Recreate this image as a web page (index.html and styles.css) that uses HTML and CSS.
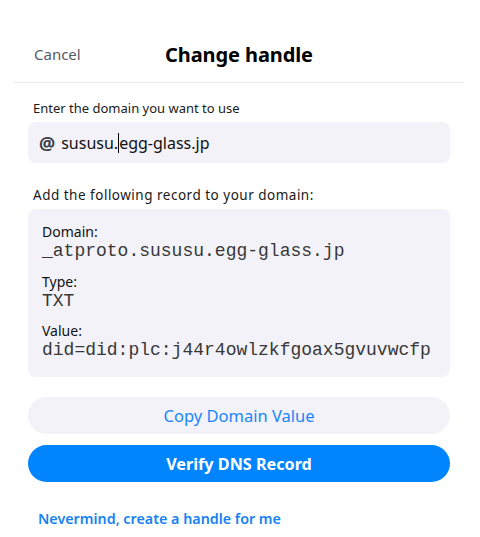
FILE: index.html
```html
<!DOCTYPE html>
<html>
<head>
<meta charset="utf-8">
<link rel="stylesheet" href="styles.css">
</head>
<body>
<div class="sheet">
  <header class="header">
    <span class="cancel">Cancel</span>
    <h1 class="title">Change handle</h1>
    <span class="spacer"></span>
  </header>
  <main class="content">
    <label class="label">Enter the domain you want to use</label>
    <div class="input">
      <span class="at">@</span>
      <span class="value">sususu.<span class="caret"></span>egg-glass.jp</span>
    </div>
    <p class="label label-record">Add the following record to your domain:</p>
    <div class="record">
      <div class="field">
        <div class="field-name">Domain:</div>
        <div class="field-value">_atproto.sususu.egg-glass.jp</div>
      </div>
      <div class="field">
        <div class="field-name">Type:</div>
        <div class="field-value">TXT</div>
      </div>
      <div class="field">
        <div class="field-name">Value:</div>
        <div class="field-value">did=did:plc:j44r4owlzkfgoax5gvuvwcfp</div>
      </div>
    </div>
    <button class="btn btn-secondary">Copy Domain Value</button>
    <button class="btn btn-primary">Verify DNS Record</button>
    <a class="link">Nevermind, create a handle for me</a>
  </main>
</div>
</body>
</html>
```
FILE: styles.css
```css
* { box-sizing: border-box; }
html, body { margin: 0; padding: 0; background: #fff; }
body {
  font-family: "Noto Sans", "Open Sans", sans-serif;
  color: #000;
}
.sheet {
  width: 450px;
  margin-left: 14px;
}
.header {
  height: 83px;
  display: grid;
  grid-template-columns: 1fr auto 1fr;
  align-items: center;
  border-bottom: 1px solid #ece9ee;
  padding-top: 26px;
}
.cancel {
  padding-left: 20px;
  font-size: 15px;
  color: #545b66;
}
.title {
  margin: 0;
  font-size: 20px;
  font-weight: 700;
  letter-spacing: -0.1px;
}
.content {
  padding: 16px 14px 0;
  display: flex;
  flex-direction: column;
}
.label {
  display: block;
  margin: 0 0 0 5px;
  font-size: 13px;
  color: #1a1a1a;
  line-height: 19px;
}
.input {
  margin-top: 4px;
  height: 41px;
  background: #f2f2f8;
  border-radius: 8px;
  display: flex;
  align-items: center;
  padding-left: 11px;
  font-size: 16px;
}
.at {
  font-weight: 700;
  color: #3b3f46;
  font-size: 18px;
  margin-right: 6px;
  line-height: 1;
}
.value { color: #111; }
.caret {
  display: inline-block;
  width: 1px;
  height: 20px;
  background: #000;
  vertical-align: -4px;
}
.label-record {
  margin-top: 23px;
  font-size: 13.5px;
  letter-spacing: 0.5px;
}
.record {
  margin-top: 4px;
  background: #f2f2f8;
  border-radius: 8px;
  padding: 14px 14px 17px;
  display: flex;
  flex-direction: column;
  gap: 11.5px;
}
.field-name {
  font-size: 14px;
  line-height: 18px;
  color: #111;
}
.field-value {
  font-family: "Liberation Mono", "Courier New", monospace;
  font-size: 18px;
  line-height: 20px;
  color: #383838;
}
.btn {
  border: none;
  border-radius: 20px;
  height: 37px;
  font-family: inherit;
  width: 100%;
  cursor: pointer;
}
.btn-secondary {
  margin-top: 20px;
  background: #f2f2f8;
  color: #1b86f9;
  font-size: 16.5px;
}
.btn-primary {
  margin-top: 11px;
  background: #0085ff;
  color: #fff;
  font-weight: 700;
  font-size: 16.2px;
}
.link {
  margin-top: 27px;
  margin-left: 10px;
  font-size: 14.3px;
  font-weight: 600;
  color: #1683f3;
}
```
